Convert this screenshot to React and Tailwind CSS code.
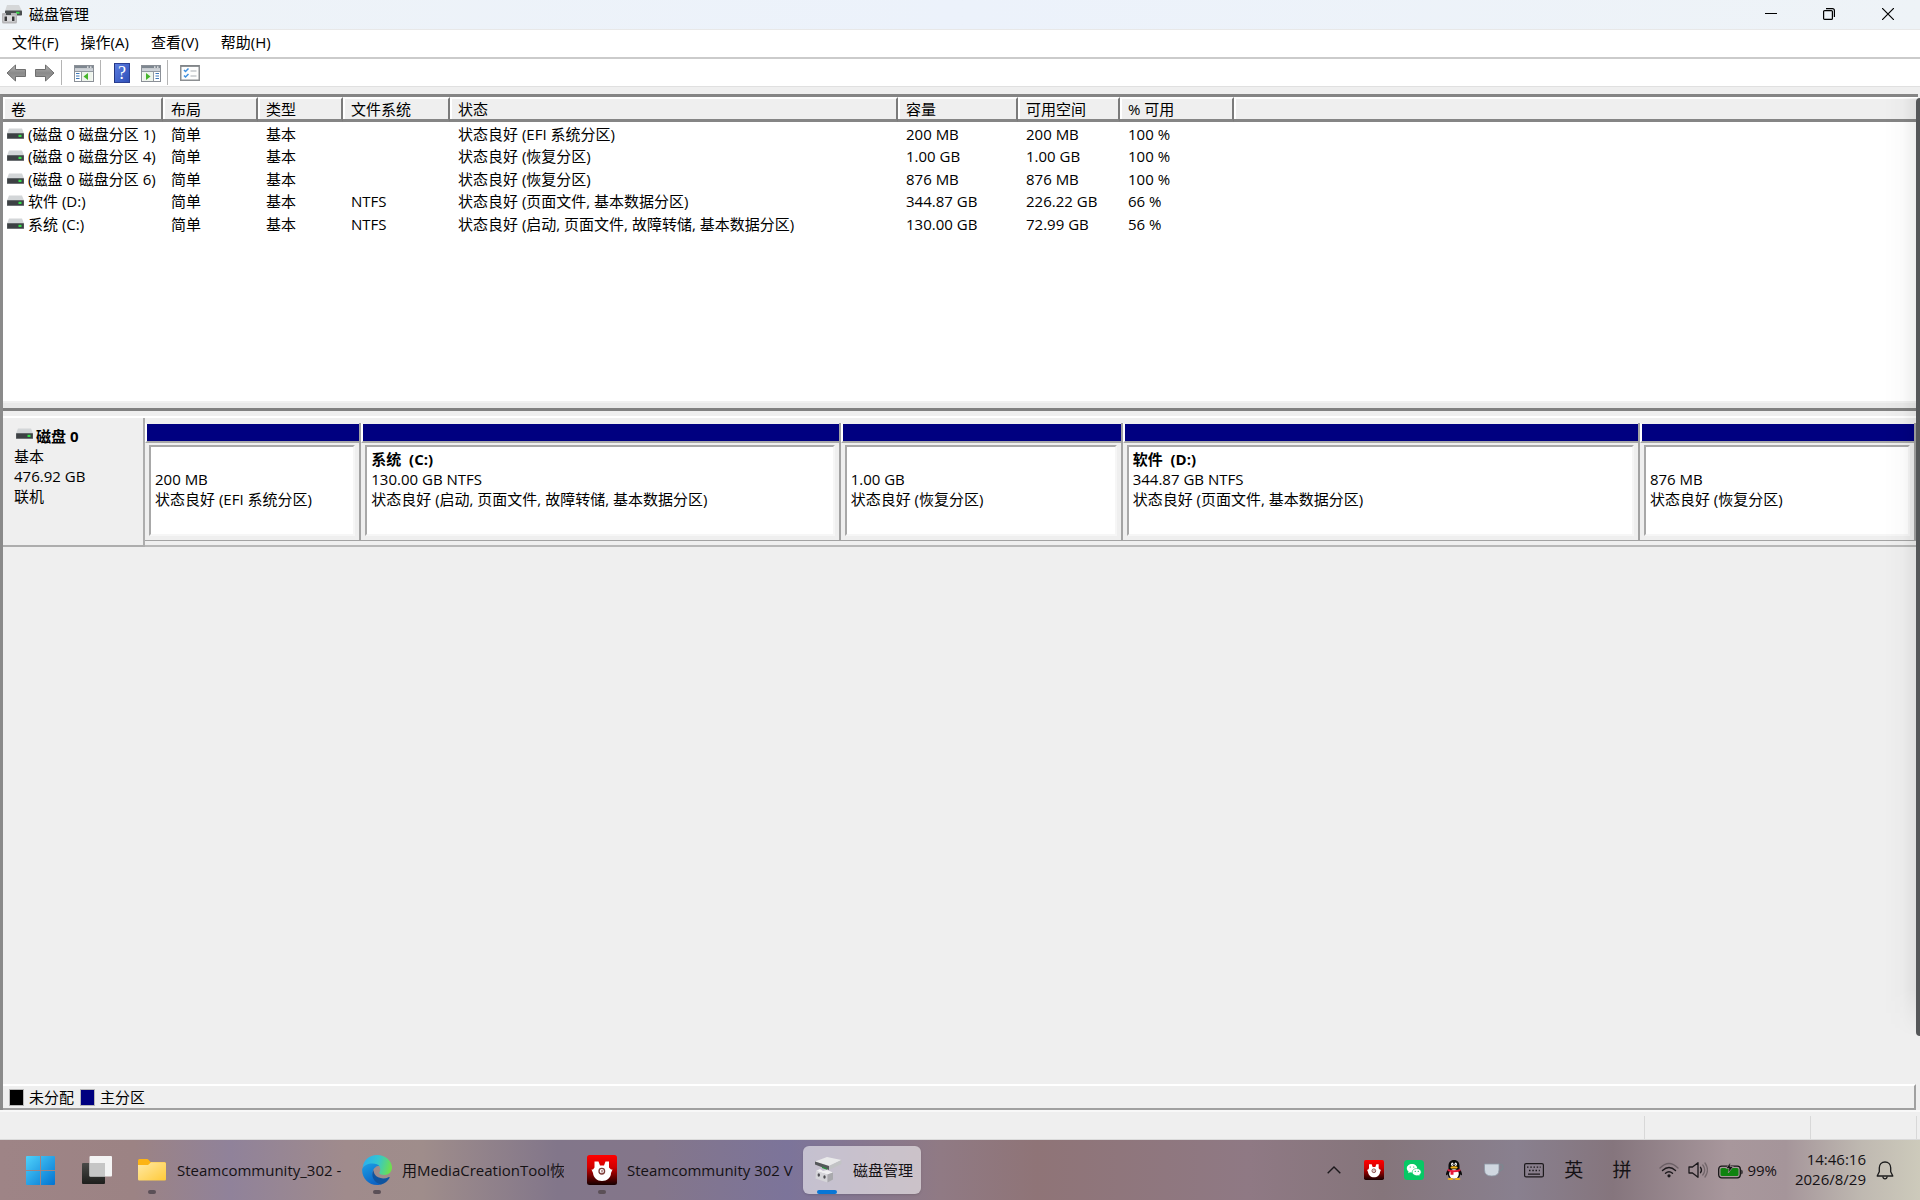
const volumes = [
  ['(磁盘 0 磁盘分区 1)', '简单', '基本', '', '状态良好 (EFI 系统分区)', '200 MB', '200 MB', '100 %'],
  ['(磁盘 0 磁盘分区 4)', '简单', '基本', '', '状态良好 (恢复分区)', '1.00 GB', '1.00 GB', '100 %'],
  ['(磁盘 0 磁盘分区 6)', '简单', '基本', '', '状态良好 (恢复分区)', '876 MB', '876 MB', '100 %'],
  ['软件 (D:)', '简单', '基本', 'NTFS', '状态良好 (页面文件, 基本数据分区)', '344.87 GB', '226.22 GB', '66 %'],
  ['系统 (C:)', '简单', '基本', 'NTFS', '状态良好 (启动, 页面文件, 故障转储, 基本数据分区)', '130.00 GB', '72.99 GB', '56 %'],
];

const columns = [
  ['卷', 'w-[160px]'],
  ['布局', 'w-[95px]'],
  ['类型', 'w-[85px]'],
  ['文件系统', 'w-[107px]'],
  ['状态', 'w-[448px]'],
  ['容量', 'w-[120px]'],
  ['可用空间', 'w-[102px]'],
  ['% 可用', 'w-[114px]'],
];

const partitions = [
  { name: '', size: '200 MB', status: '状态良好 (EFI 系统分区)', grow: 'grow-[215]' },
  { name: '系统\u00a0\u00a0(C:)', size: '130.00 GB NTFS', status: '状态良好 (启动, 页面文件, 故障转储, 基本数据分区)', grow: 'grow-[479]' },
  { name: '', size: '1.00 GB', status: '状态良好 (恢复分区)', grow: 'grow-[281]' },
  { name: '软件\u00a0\u00a0(D:)', size: '344.87 GB NTFS', status: '状态良好 (页面文件, 基本数据分区)', grow: 'grow-[517]' },
  { name: '', size: '876 MB', status: '状态良好 (恢复分区)', grow: 'grow-[275]' },
];

function DriveIcon({ className = '' }) {
  return (
    <svg viewBox="0 0 17 12" className={`h-3 w-[17px] shrink-0 ${className}`} aria-hidden="true">
      <path d="M2 0.500h13L17 5.500H0z" fill="#d3d6d8" />
      <rect x="0" y="5" width="17" height="6" rx="0.600" fill="#7b7f82" />
      <rect x="0.300" y="5.600" width="16.400" height="4.600" fill="#3d4144" />
      <rect x="11.500" y="6.800" width="3" height="2.200" fill="#35e04a" />
    </svg>
  );
}

function AppIcon() {
  return (
    <svg viewBox="0 0 20 20" className="h-5 w-5" aria-hidden="true">
      <path d="M5 1h12l3 6H3z" fill="#d5d7d8" />
      <rect x="3" y="6.500" width="17" height="5" rx="0.800" fill="#4a4e50" />
      <rect x="14" y="7.800" width="3.500" height="2" fill="#3fd84e" />
      <path d="M0 10q0-1 1-1h3v2h5V9h5q1 0 1 1v8q0 1.500-1.500 1.500h-12Q0 19.500 0 18z" fill="#b6b6b8" />
      <rect x="1.500" y="11.500" width="12" height="6" fill="#dcdcde" />
      <rect x="2.500" y="12.500" width="2.500" height="4.500" fill="#3a3a3c" />
      <rect x="10" y="12.500" width="2.500" height="4.500" fill="#3a3a3c" />
    </svg>
  );
}

function Arrow({ flip }) {
  return (
    <svg viewBox="0 0 20 18" className={flip ? 'h-[18px] w-5 -scale-x-100' : 'h-[18px] w-5'} aria-hidden="true">
      <defs>
        <linearGradient id={flip ? 'arrowR' : 'arrowL'} x1="0" y1="0" x2="0" y2="1">
          <stop offset="0" stopColor="#b5b5b5" />
          <stop offset="0.5" stopColor="#8a8a8a" />
          <stop offset="1" stopColor="#a2a2a2" />
        </linearGradient>
      </defs>
      <path d="M1 9 9.500 1v4.500h10v7h-10V17z" fill={flip ? 'url(#arrowR)' : 'url(#arrowL)'} stroke="#6f6f6f" strokeWidth="1" />
    </svg>
  );
}

function PaneIcon({ right }) {
  return (
    <svg viewBox="0 -2 20 19" className="h-[19px] w-5" aria-hidden="true">
      <rect x="0.500" y="0.500" width="19" height="16" fill="#fff" stroke="#8b9097" />
      <rect x="1" y="1" width="18" height="2.500" fill="#7e8790" />
      <rect x="13" y="1.500" width="1.500" height="1.200" fill="#fff" />
      <rect x="16" y="1.500" width="1.500" height="1.200" fill="#fff" />
      <rect x="1" y="3.500" width="18" height="2.500" fill="#cdd2d8" />
      <path d="M1 6.500h18" stroke="#9299a1" />
      {right ? (
        <>
          <path d="M12.500 7v9" stroke="#9299a1" />
          <path d="M14.500 8.500h3.500M14.500 11h3.500M14.500 13.500h3.500" stroke="#3f79b8" strokeWidth="1.200" />
          <rect x="1.500" y="7" width="10.500" height="9" fill="#eef4ec" />
          <path d="M5 8v7l4.500-3.500z" fill="#46b52c" />
        </>
      ) : (
        <>
          <path d="M7.500 7v9" stroke="#9299a1" />
          <path d="M2 8.500h3.500M2 11h3.500M2 13.500h3.500" stroke="#3f79b8" strokeWidth="1.200" />
          <rect x="8" y="7" width="10.500" height="9" fill="#eef4ec" />
          <path d="M14 8v7l-4.500-3.500z" fill="#46b52c" />
        </>
      )}
    </svg>
  );
}

function HelpIcon() {
  return (
    <span className="flex h-5 w-4 items-center justify-center border border-[#2b3f94] border-l-[#22347f] bg-linear-to-br from-[#5b7de0] to-[#2f4fb8] text-lg leading-5 text-white [font-family:'Liberation_Serif',serif]">?</span>
  );
}

function ListIcon() {
  return (
    <svg viewBox="0 0 20 16" className="h-4 w-5" aria-hidden="true">
      <rect x="0.750" y="0.750" width="18.500" height="14.500" fill="#fdfdfd" stroke="#8c8f92" strokeWidth="1.500" />
      <path d="M1 1h18" stroke="#7d8184" strokeWidth="1.500" />
      <path d="m4 5 1.500 1.500L8.500 3.500M4 10.500 5.500 12l3-3" fill="none" stroke="#3c8fe0" strokeWidth="1.500" />
      <path d="M10.500 6h6M10.500 11h6" stroke="#c4c8cc" strokeWidth="1.500" />
    </svg>
  );
}

function Separator() {
  return <span className="h-[25px] w-px bg-[#b4b4b4]" />;
}

function WindowsIcon() {
  return (
    <svg viewBox="0 0 29 29" className="h-[29px] w-[29px]" aria-hidden="true">
      <defs>
        <linearGradient id="win" gradientUnits="userSpaceOnUse" x1="0" y1="0" x2="29" y2="29">
          <stop offset="0" stopColor="#4fd2fb" />
          <stop offset="1" stopColor="#0273d1" />
        </linearGradient>
      </defs>
      <path d="M1 0h13v14H0V1q0-1 1-1zM15 0h13q1 0 1 1v13H15zM0 15h14v14H1q-1 0-1-1zM15 15h14v13q0 1-1 1H15z" fill="url(#win)" />
    </svg>
  );
}

function TaskViewIcon() {
  return (
    <svg viewBox="0 0 30 28" className="h-7 w-[30px]" aria-hidden="true">
      <defs>
        <linearGradient id="tvd" x1="0" y1="0" x2="0" y2="1">
          <stop offset="0" stopColor="#4a4a48" />
          <stop offset="1" stopColor="#1e1e1c" />
        </linearGradient>
      </defs>
      <rect x="0" y="7" width="23" height="21" rx="1" fill="url(#tvd)" />
      <rect x="7.500" y="0" width="22.500" height="20.500" rx="1" fill="#f4f4f4" />
      <rect x="7.500" y="7" width="15.500" height="13.500" fill="#c6c6c6" />
    </svg>
  );
}

function FolderIcon() {
  return (
    <svg viewBox="0 0 28 22" className="h-[22px] w-7" aria-hidden="true">
      <defs>
        <linearGradient id="fold" x1="0" y1="0" x2="1" y2="1">
          <stop offset="0" stopColor="#ffe9a6" />
          <stop offset="1" stopColor="#ffca38" />
        </linearGradient>
      </defs>
      <path d="M0 1.500Q0 0 1.500 0h7.500q1 0 1.500.7L12.500 3H26.500q1.500 0 1.500 1.500V10H0z" fill="#fcb415" />
      <path d="M0 6h9q1 0 1.600-.6L13 3.300h13.500q1.500 0 1.500 1.500v15.500q0 1.200-1.200 1.200H1.200Q0 21.500 0 20.300z" fill="url(#fold)" />
    </svg>
  );
}

function EdgeIcon() {
  return (
    <svg viewBox="0 0 30 30" className="h-[30px] w-[30px]" aria-hidden="true">
      <defs>
        <linearGradient id="eg1" x1="0" y1="0.300" x2="1" y2="0.500">
          <stop offset="0" stopColor="#2aaef0" />
          <stop offset="0.500" stopColor="#34c6d0" />
          <stop offset="1" stopColor="#6fe04b" />
        </linearGradient>
        <linearGradient id="eg2" x1="0" y1="0" x2="0.500" y2="1">
          <stop offset="0" stopColor="#1ba0e6" />
          <stop offset="1" stopColor="#0c63c4" />
        </linearGradient>
      </defs>
      <path d="M0.500 13C1.500 5 7.500 0 15 0c8.500 0 15 6 15 12.500 0 4.500-3.500 7.500-7.500 7.500-3 0-5.200-1-5.200-2.300 0-.9 1-1.300 1-3.500 0-3-2.800-5.200-6.800-5.200C6.500 9 2 10.500.5 13z" fill="url(#eg1)" />
      <path d="M0.200 14C1.500 10.500 6 8.500 10.500 8.500c3.500 0 6 1.200 7.200 3-1.500-.8-3.200-.3-4.200.7C11 14 10 17 11 20.500c1 4 4.500 7.500 9.500 8C18.800 29.500 17 30 15 30 6.500 30-.5 23 .2 14z" fill="url(#eg2)" />
      <path d="M11.500 15c-3 5 0 13 7.500 14.400 4-.9 7-3.600 8.500-6.400.4-.8-.3-1.200-1-.8-4.500 2.300-11.500 1.300-14-3.200-.7-1.300-1-2.700-1-4z" fill="#0f549f" />
    </svg>
  );
}

function RabbitIcon({ className }) {
  return (
    <svg viewBox="0 0 30 30" className={className} aria-hidden="true">
      <defs>
        <linearGradient id="rab" x1="0" y1="0" x2="0" y2="1">
          <stop offset="0" stopColor="#ff0000" />
          <stop offset="0.400" stopColor="#d20000" />
          <stop offset="1" stopColor="#140000" />
        </linearGradient>
      </defs>
      <rect width="30" height="30" rx="2.500" fill="url(#rab)" />
      <path d="M7.500 6.500h4l1.500 4h4l1.500-4h3.500v6l2 2h1.500l-1.500 3.500C24 22.500 20 26 15 26S6.500 22.500 6 18l-1.500-3.500H6l1.500-2z" fill="#fff" />
      <circle cx="14.800" cy="16.200" r="2.800" fill="none" stroke="#7c3b38" strokeWidth="1.300" />
      <path d="M15 15v2.500" stroke="#7c3b38" strokeWidth="1" />
    </svg>
  );
}

function DiskToolIcon() {
  return (
    <svg viewBox="0 0 28 26" className="h-[26px] w-7" aria-hidden="true">
      <path d="M1 4.500 13 0l14.500 3L15 9z" fill="#e9e9ea" />
      <path d="M1 4.500 15 9v4L1 7.500z" fill="#55585a" />
      <path d="M15 9l12.500-6v4L15 13z" fill="#c2c3c5" />
      <path d="M8 9.500l5 1.700v1.500l-5-1.700z" fill="#2c8a40" />
      <path d="M2 14l4-2 3 2 4-1 6 2.500-5.500 2z" fill="#efeff1" />
      <path d="M2 14l11.500 3.500V25.500L1.500 21.500z" fill="#d5d5d9" />
      <path d="M13.500 17.500l5.500-2v7l-5.500 3z" fill="#a9a9ad" />
      <ellipse cx="4.800" cy="18" rx="1.200" ry="1.800" fill="#4d4d52" />
      <ellipse cx="10.500" cy="20" rx="1.200" ry="1.800" fill="#4d4d52" />
    </svg>
  );
}

function WeChatIcon() {
  return (
    <svg viewBox="0 0 20 20" className="h-5 w-5" aria-hidden="true">
      <rect width="20" height="20" rx="3.500" fill="#07c865" />
      <path d="M8 4C5 4 2.800 5.900 2.800 8.300c0 1.300.7 2.500 1.800 3.300l-.4 1.600 1.800-.9c.6.200 1.300.3 2 .3 3 0 5.200-1.900 5.200-4.300S11 4 8 4z" fill="#fff" />
      <path d="M12.700 8.500c-2.500 0-4.500 1.600-4.500 3.600s2 3.600 4.500 3.600c.6 0 1.100-.1 1.600-.2l1.600.8-.4-1.400c1-.7 1.700-1.700 1.700-2.800 0-2-2-3.600-4.500-3.600z" fill="#fff" stroke="#07c865" strokeWidth="0.600" />
      <path d="M6.200 7h.1M9.700 7h.1M11.200 11.300h.1M14.200 11.300h.1" stroke="#07b05a" strokeWidth="1.200" strokeLinecap="round" />
    </svg>
  );
}

function QQIcon() {
  return (
    <svg viewBox="0 0 18 20" className="h-5 w-[18px]" aria-hidden="true">
      <path d="M9 0C5.500 0 3.500 2.500 3.500 6v3C2 10.500.8 13 1 15c.2.600 1 .2 1.700-.7C3 17.500 5.500 19 9 19s6-1.500 6.300-4.700c.7.900 1.500 1.300 1.700.7.200-2-1-4.500-2.500-6V6c0-3.500-2-6-5.500-6z" fill="#0b0b0b" />
      <ellipse cx="9" cy="14" rx="4.800" ry="4.800" fill="#fff" />
      <ellipse cx="7.300" cy="4.300" rx="1.200" ry="1.700" fill="#fff" />
      <ellipse cx="10.700" cy="4.300" rx="1.200" ry="1.700" fill="#fff" />
      <path d="M7.500 4.500h.5M10 4.500h.5" stroke="#000" />
      <ellipse cx="9" cy="7.400" rx="3.600" ry="1.200" fill="#f5b417" />
      <path d="M3 9q6 2.500 12 0l.5 2q-3 1.300-7 1.300v2.500H5.500v-3L2.500 11z" fill="#e8173a" />
      <ellipse cx="5.500" cy="19" rx="3" ry="1" fill="#f5b417" />
      <ellipse cx="12.500" cy="19" rx="3" ry="1" fill="#f5b417" />
    </svg>
  );
}

function CupIcon() {
  return (
    <svg viewBox="0 0 20 15" className="h-[15px] w-5" aria-hidden="true">
      <path d="M14 1.500h2.500q2.500 0 2.500 2.500t-3.500 4" fill="none" stroke="#7d868f" strokeWidth="1.500" />
      <path d="M0.500 1h14.500v6q0 6-7.200 6T.5 7z" fill="#d0d7e0" stroke="#8d98a5" strokeWidth="0.800" />
    </svg>
  );
}

function KeyboardIcon() {
  return (
    <svg viewBox="0 0 20 15" className="h-[15px] w-5" fill="none" stroke="#1c191c" aria-hidden="true">
      <rect x="0.600" y="0.600" width="18.800" height="13.300" rx="1.500" strokeWidth="1.200" />
      <path d="M3 4.200h1.500M6.300 4.200h1.500M9.500 4.200H11M12.700 4.200h1.500M15.700 4.200h1M5 7.500h1.500M8.300 7.500h1.500M11.500 7.500H13M14.800 7.500h1M4 11.200h12" strokeWidth="1.300" />
    </svg>
  );
}

function WifiIcon() {
  return (
    <svg viewBox="0 0 20 16" className="h-4 w-5" fill="none" strokeLinecap="round" aria-hidden="true">
      <path d="M1 6Q10-3 19 6" stroke="#1c191c" strokeOpacity="0.350" strokeWidth="1.300" />
      <path d="M3.500 8.500q6.500-6 13 0M6.500 11.300q3.500-3.200 7 0" stroke="#1c191c" strokeWidth="1.400" />
      <circle cx="10" cy="13.800" r="1.600" fill="#1c191c" />
    </svg>
  );
}

function SpeakerIcon() {
  return (
    <svg viewBox="0 0 20 18" className="h-[18px] w-5" fill="none" stroke="#1c191c" strokeWidth="1.300" strokeLinecap="round" strokeLinejoin="round" aria-hidden="true">
      <path d="M1 6h3.500L10 1.700v14.600L4.500 12H1z" />
      <path d="M12.500 6.300q2 2.700 0 5.400" />
      <path d="M14.800 4q3.800 5 0 10M17 2q5 7 0 14" strokeOpacity="0.350" />
    </svg>
  );
}

function BatteryIcon() {
  return (
    <svg viewBox="0 0 25 17" className="h-[17px] w-[25px]" aria-hidden="true">
      <rect x="0.700" y="4.200" width="21.600" height="11.600" rx="3" fill="#a8989c" stroke="#151515" strokeWidth="1.300" />
      <rect x="2.500" y="6" width="18" height="8" rx="1.500" fill="#0f8310" />
      <path d="M23.300 7.500q1.400.5 1.400 2.500t-1.400 2.500z" fill="#151515" />
      <path d="M12.500 0 8 6.500h3l-.7 4.500 5-6.500h-3.200z" fill="#151515" stroke="#b5a5aa" strokeWidth="0.600" />
    </svg>
  );
}

function BellIcon() {
  return (
    <svg viewBox="0 0 18 19" className="h-[19px] w-[18px]" fill="none" stroke="#1c1c1c" strokeWidth="1.300" strokeLinejoin="round" aria-hidden="true">
      <path d="M9 1C5.500 1 3.300 3.500 3.300 6.800v4L1.200 15h15.600l-2.100-4.200v-4C14.700 3.500 12.500 1 9 1z" />
      <path d="M6.800 15.500q.3 2.300 2.200 2.300t2.200-2.300" />
    </svg>
  );
}

function TaskButton({ icon, label, width, labelWidth = '', active }) {
  return (
    <button
      className={`relative flex h-12 items-center gap-[10px] rounded-md pl-[10px] ${width} ${active ? 'bg-[#ffffff8c] shadow-sm' : ''}`}
    >
      <span className="flex w-[30px] shrink-0 items-center justify-center">{icon}</span>
      <span className={`overflow-hidden text-[15px] leading-6 whitespace-nowrap ${labelWidth}`}>{label}</span>
      <span
        className={
          active
            ? 'absolute bottom-0 left-[14px] h-1 w-5 rounded-full bg-[#0876d6]'
            : 'absolute bottom-0 left-[21px] h-1 w-2 rounded-full bg-[#5b5057]'
        }
      />
    </button>
  );
}

export default function App() {
  return (
    <div className="relative flex h-screen flex-col overflow-hidden bg-[#efefef] text-[15px] leading-5 text-black [font-family:'Open_Sans','Noto_Sans_CJK_SC',sans-serif]">
      <header className="flex h-[29px] shrink-0 items-center bg-linear-to-r from-[#eef3f7] via-[#ecf2fb] to-[#eef3f7] pb-[2px] pl-[2px]">
        <AppIcon />
        <h1 className="ml-[7px] grow">磁盘管理</h1>
        <button aria-label="最小化" className="flex h-full w-[58px] items-center justify-center">
          <svg viewBox="0 0 12 12" className="h-3 w-3"><path d="M0 5.500h12" stroke="#000" /></svg>
        </button>
        <button aria-label="向下还原" className="flex h-full w-[58px] items-center justify-center">
          <svg viewBox="0 0 12 12" className="h-3 w-3" fill="none" stroke="#000" strokeWidth="1.200">
            <rect x="0.600" y="2.600" width="8.800" height="8.800" rx="1" />
            <path d="M3 .6h6.400q2 0 2 2V9" />
          </svg>
        </button>
        <button aria-label="关闭" className="mr-[2px] flex h-full w-[60px] items-center justify-center">
          <svg viewBox="0 0 12 12" className="h-3 w-3"><path d="m0 0 12 12M12 0 0 12" stroke="#000" strokeWidth="1.200" /></svg>
        </button>
      </header>

      <nav className="flex h-7 shrink-0 items-center gap-[22px] border-t border-[#e8e8e8] bg-white pb-[3px] pl-3">
        {['文件(F)', '操作(A)', '查看(V)', '帮助(H)'].map((item) => (
          <button key={item}>{item}</button>
        ))}
      </nav>

      <div className="flex h-[30px] shrink-0 items-center border-t-2 border-b border-t-[#cbcbcb] border-b-[#e0e0e0] bg-white pl-[6px]">
        <button aria-label="后退"><Arrow /></button>
        <button aria-label="前进" className="ml-[9px]"><Arrow flip /></button>
        <span className="ml-[6px] flex"><Separator /></span>
        <button aria-label="显示控制台树" className="ml-3"><PaneIcon /></button>
        <span className="ml-[6px] flex"><Separator /></span>
        <button aria-label="帮助" className="ml-[13px]"><HelpIcon /></button>
        <button aria-label="显示操作窗格" className="ml-[11px]"><PaneIcon right /></button>
        <span className="ml-[6px] flex"><Separator /></span>
        <button aria-label="属性" className="ml-3"><ListIcon /></button>
      </div>

      <main className="mt-[7px] mr-[2px] flex min-h-0 grow flex-col border-t-[3px] border-l-[3px] border-t-[#858585] border-l-[#8a8a8a]">
        <section className="h-[304px] shrink-0 bg-white">
          <table className="w-full table-fixed border-separate border-spacing-0 text-left">
            <thead>
              <tr className="bg-[#efefef] leading-5">
                {columns.map(([label, width]) => (
                  <th key={label} className={`${width} h-[25px] border-t-2 border-r-2 border-b-[3px] border-t-white border-r-[#7b7b7b] border-b-[#858585] p-0 pl-2 font-normal shadow-[inset_2px_0_0_#fff]`}>
                    {label}
                  </th>
                ))}
                <th className="border-t-2 border-b-[3px] border-t-white border-b-[#858585] p-0 shadow-[inset_2px_0_0_#fff]" aria-label="空白" />
              </tr>
            </thead>
            <tbody>
              {volumes.map((row) => (
                <tr key={row[0]} className="h-[22px] odd:h-[23px]">
                  {row.map((cell, i) => (
                    <td key={i} className="p-0 pl-2 whitespace-nowrap first:pl-1">
                      {i === 0 ? (
                        <span className="flex items-center gap-1">
                          <DriveIcon />
                          {cell}
                        </span>
                      ) : (
                        cell
                      )}
                    </td>
                  ))}
                  <td />
                </tr>
              ))}
            </tbody>
          </table>
        </section>

        <div className="h-[10px] shrink-0 border-t-2 border-b-[3px] border-t-[#f0f0f0] border-b-[#808080] bg-[#e9e9e9]" />

        <section className="mt-[5px] mr-[2px] flex h-[131px] shrink-0 items-start border-t-2 border-white">
          <div className="h-full w-[142px] shrink-0 border-r-2 border-b-2 border-[#adadad] pt-2 pl-[11px]">
            <div className="flex items-start font-bold">
              <DriveIcon className="mt-[2px] ml-[2px]" />
              <span className="ml-[3px]">磁盘 0</span>
            </div>
            <div>基本</div>
            <div>476.92 GB</div>
            <div>联机</div>
          </div>
          <div className="flex h-[129px] grow border-b-2 border-[#b8b8b8] pt-[5px] pb-1">
            {partitions.map((p) => (
              <div key={p.status + p.size} className={`flex min-w-0 basis-0 flex-col border-r-2 border-b border-[#a3a3a3] ${p.grow}`}>
                <div className="h-5 border-t border-b-2 border-l-2 border-t-[#efefef] border-b-[#a8a8a8] border-l-white bg-[#000080]" />
                <div className="m-1 mt-[2px] min-h-0 grow border-2 border-t-[#a8a8a8] border-r-[#f6f6f6] border-b-[#f6f6f6] border-l-[#a8a8a8] bg-white pt-[2px] pl-1 whitespace-nowrap">
                  <div className="h-5 font-bold">{p.name}</div>
                  <div>{p.size}</div>
                  <div>{p.status}</div>
                </div>
              </div>
            ))}
          </div>
        </section>

        <div className="grow" />

        <footer className="mr-[2px] flex h-[26px] shrink-0 items-center border-t-2 border-r-2 border-b-2 border-t-white border-r-[#a0a0a0] border-b-[#a0a0a0] pl-[6px]">
          <span className="h-[17px] w-[15px] border border-[#b8b8b8] bg-black" />
          <span className="ml-[5px]">未分配</span>
          <span className="ml-[6px] h-[17px] w-[15px] border border-[#b8b8b8] bg-[#000080]" />
          <span className="ml-[5px]">主分区</span>
        </footer>
      </main>

      <div className="flex h-[30px] shrink-0 justify-end border-t-2 border-b border-t-[#f8f8f8] border-b-[#dadada] pt-1 pr-[3px]">
        <div className="w-[166px] border-l border-[#d8d8d8]" />
        <div className="w-[107px] border-x border-[#d8d8d8]" />
      </div>

      <div className="flex h-[60px] shrink-0 items-center bg-[linear-gradient(90deg,#9e8486_0%,#9c8384_7%,#90829a_12%,#a08b8c_18%,#9f8d8b_22%,#82768a_29%,#84768a_34%,#7c749a_41%,#907a84_49%,#8f7477_54%,#8f7984_65%,#85757b_72%,#89808f_79%,#85757d_84%,#a8979c_90%,#a5959a_93%,#bfb9b1_97%,#cdcabb_100%)] text-[#151215]">
        <button aria-label="开始" className="ml-[26px]"><WindowsIcon /></button>
        <button aria-label="任务视图" className="ml-[27px]"><TaskViewIcon /></button>
        <nav className="ml-[15px] flex">
          <TaskButton width="w-[225px]" icon={<FolderIcon />} label="Steamcommunity_302 -" />
          <TaskButton width="w-[225px]" labelWidth="w-[162px]" icon={<EdgeIcon />} label="用MediaCreationTool恢复" />
          <TaskButton width="w-[226px]" icon={<RabbitIcon className="h-[30px] w-[30px]" />} label="Steamcommunity 302 V" />
          <TaskButton width="w-[118px]" icon={<DiskToolIcon />} label="磁盘管理" active />
        </nav>
        <div className="ml-auto flex items-center">
          <button aria-label="显示隐藏的图标">
            <svg viewBox="0 0 14 8" className="h-2 w-[14px]"><path d="m.7 7.300 6.300-6.300 6.300 6.300" fill="none" stroke="#1c191c" strokeWidth="1.400" /></svg>
          </button>
          <button aria-label="Steamcommunity 302" className="ml-[23px]"><RabbitIcon className="h-5 w-5" /></button>
          <button aria-label="微信" className="ml-5"><WeChatIcon /></button>
          <button aria-label="QQ" className="ml-[21px]"><QQIcon /></button>
          <button aria-label="咖啡杯" className="ml-[21px]"><CupIcon /></button>
          <button aria-label="触摸键盘" className="ml-5"><KeyboardIcon /></button>
          <button className="ml-5 text-[19px] leading-6">英</button>
          <button className="ml-[29px] text-[19px] leading-6">拼</button>
          <button aria-label="网络" className="ml-7"><WifiIcon /></button>
          <button aria-label="音量" className="ml-[9px]"><SpeakerIcon /></button>
          <button className="ml-[10px] flex items-center gap-1 text-[15px]">
            <BatteryIcon />
            99%
          </button>
          <button className="ml-[18px] pb-[2px] text-right text-[15px] leading-5">
            <div>14:46:16</div>
            <div>2026/8/29</div>
          </button>
          <button aria-label="通知" className="mr-[26px] ml-[10px]"><BellIcon /></button>
        </div>
      </div>

      <div className="pointer-events-none absolute top-[98px] right-0 h-[938px] w-9 bg-linear-to-r from-transparent via-[#00000004] to-[#00000014] mask-b-from-95%" />
      <div className="pointer-events-none absolute top-[98px] right-0 h-[938px] w-1 rounded-l-md bg-[#555759]" />
    </div>
  );
}
